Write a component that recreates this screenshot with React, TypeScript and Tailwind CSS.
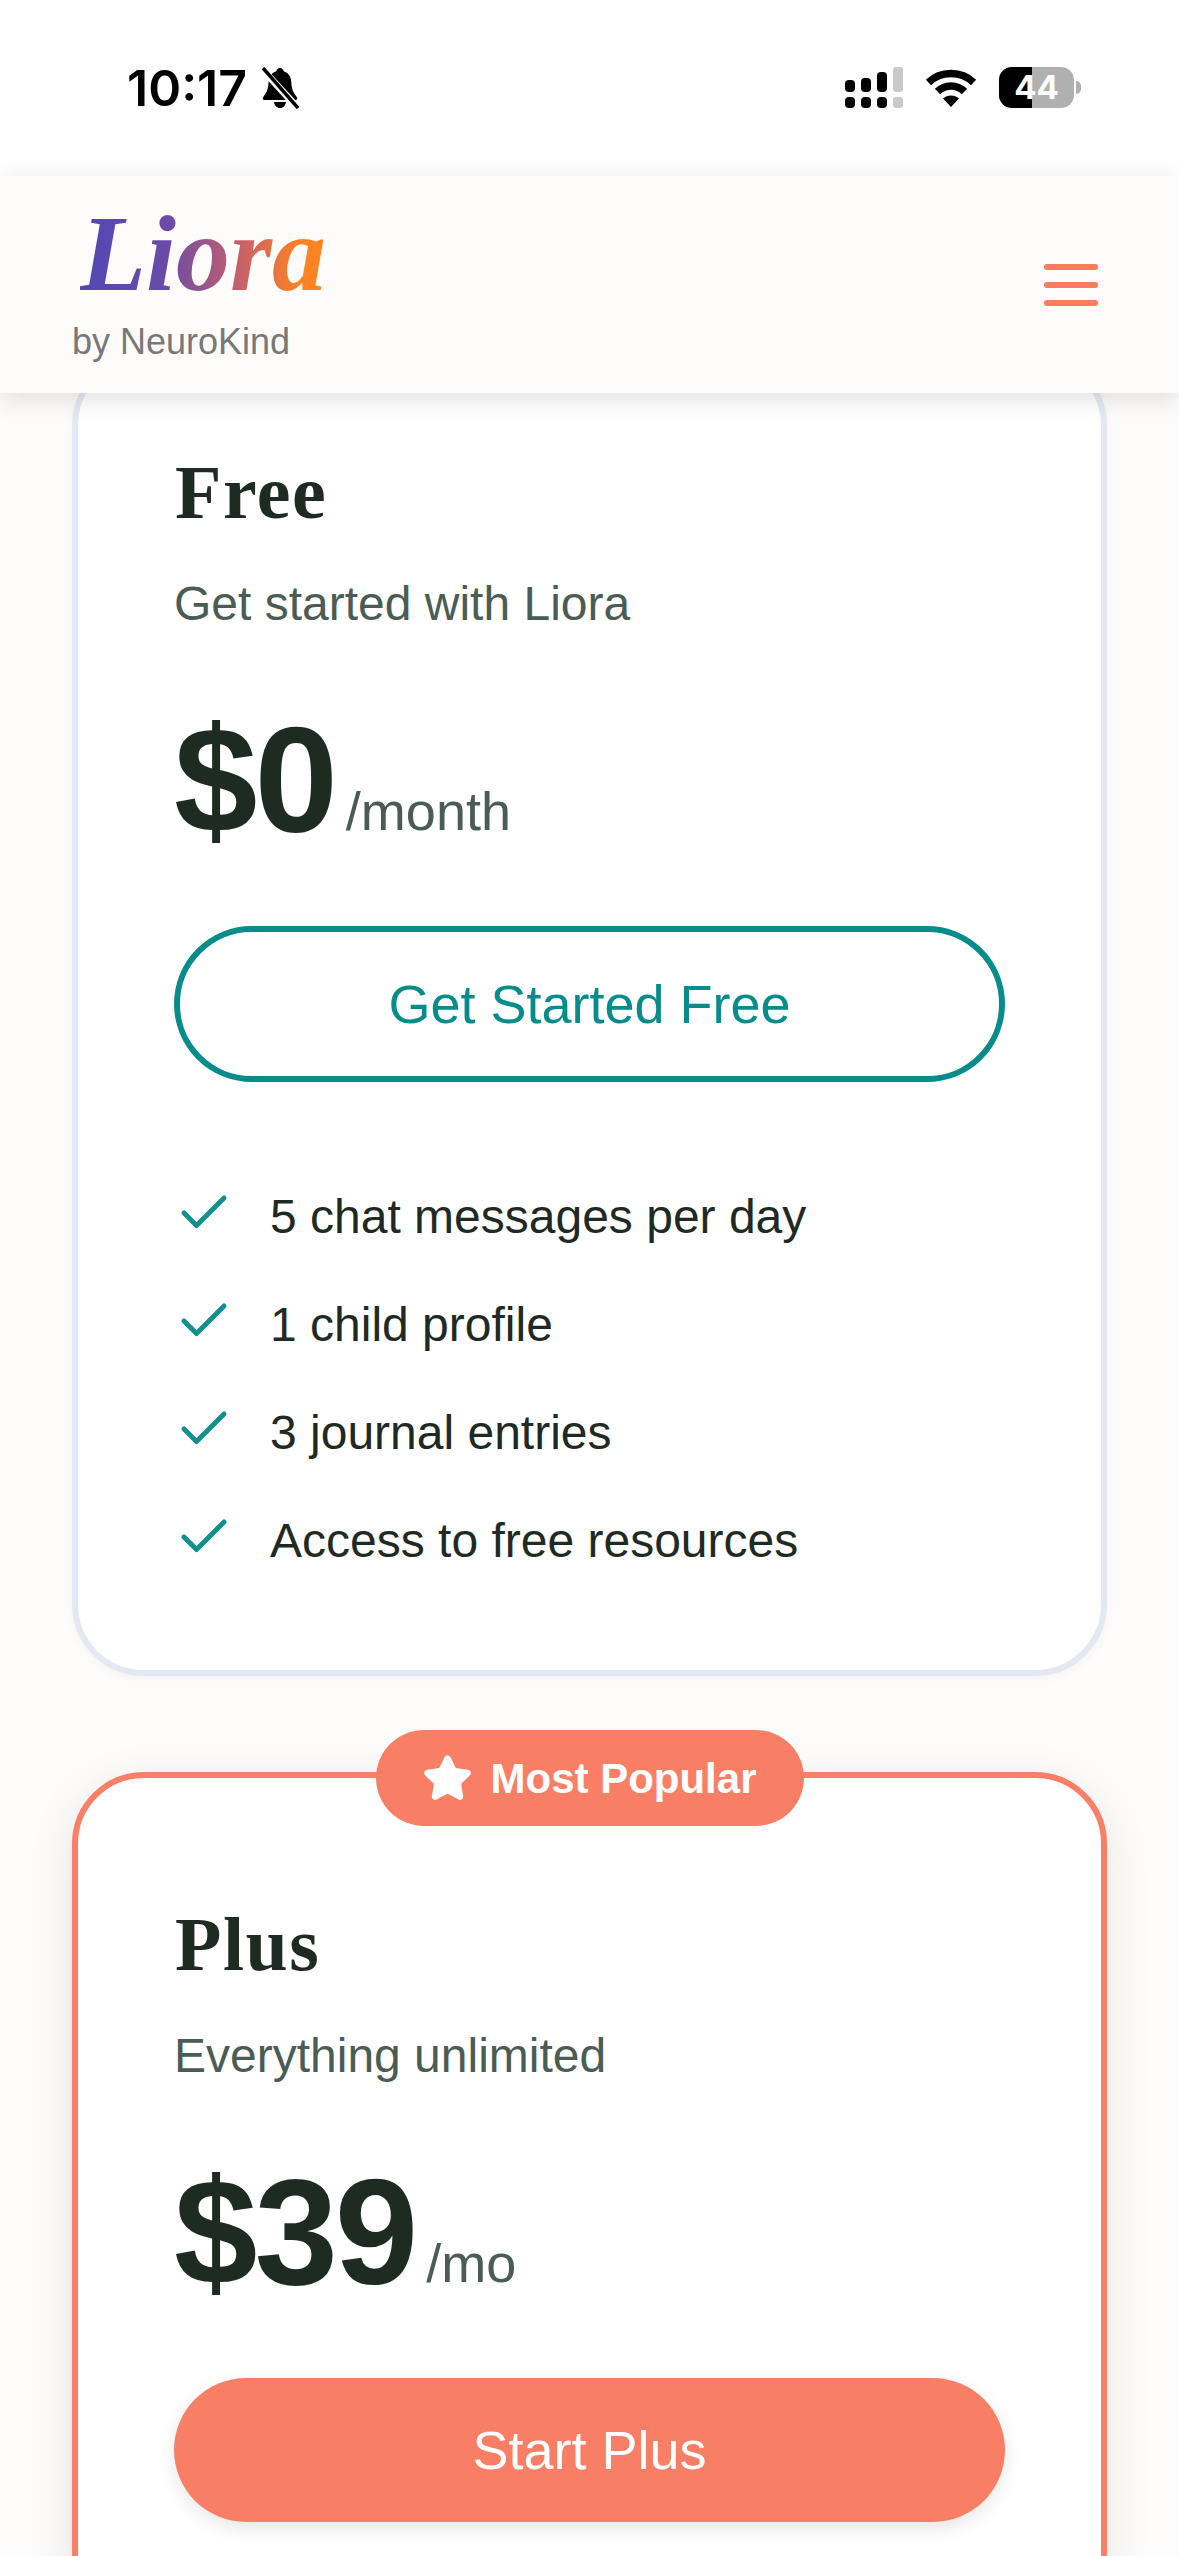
import { Check, Star } from "lucide-react";

const sans = "font-['Liberation_Sans',Arial,sans-serif]";
const serif = "font-['Liberation_Serif','Times_New_Roman',serif]";

function BellOff() {
  return (
    <svg viewBox="0 0 38 42" className="w-[38px] h-[42px]" aria-hidden="true">
      <path
        d="M19 1c-2 0-3.400 1.300-3.700 3.200C10.500 5.600 8 9.600 7.600 15c-.3 5-1 8.500-3 11.500L2 30.500c-.8 1.300 0 2.500 1.500 2.500h31c1.500 0 2.300-1.200 1.500-2.500l-3-4.500c-1.800-3-2.400-6-2.700-11-.4-5.500-3-9.400-7.600-10.800C22.400 2.300 21 1 19 1z"
        fill="#000"
      />
      <path d="M13 35h12c-.4 3.400-2.800 6-6 6s-5.600-2.600-6-6z" fill="#000" />
      <path d="M2 3l34 37" stroke="#fff" strokeWidth="7" />
      <path d="M2 1l35 40" stroke="#000" strokeWidth="3.500" />
    </svg>
  );
}

function Signal() {
  return (
    <svg viewBox="0 0 58 41" className="w-[58px] h-[41px]" aria-hidden="true">
      <rect x="0" y="13" width="10" height="12" rx="4" fill="#000" />
      <rect x="16" y="11" width="10" height="14" rx="4" fill="#000" />
      <rect x="32" y="5" width="10" height="20" rx="4" fill="#000" />
      <rect x="48" y="0" width="10" height="25" rx="3" fill="#c9c9c9" />
      <rect x="0" y="30" width="10" height="11" rx="4" fill="#000" />
      <rect x="16" y="30" width="10" height="11" rx="4" fill="#000" />
      <rect x="32" y="30" width="10" height="11" rx="4" fill="#000" />
      <rect x="48" y="30" width="10" height="11" rx="3" fill="#c9c9c9" />
    </svg>
  );
}

function Wifi() {
  return (
    <svg viewBox="0 0 52 38" className="w-[52px] h-[38px]" aria-hidden="true">
      <path d="M3.500 13.500C15.500 1.500 36.500 1.500 48.500 13.500" fill="none" stroke="#000" strokeWidth="7.500" />
      <path d="M12.500 22.500C20 15 32 15 39.500 22.500" fill="none" stroke="#000" strokeWidth="7.500" />
      <path d="M18 29.500c4.500-4 11.500-4 16 0L26 38z" fill="#000" />
    </svg>
  );
}

function Battery() {
  return (
    <div className="flex items-center gap-[2px]">
      <div className="relative w-[75px] h-[41px] rounded-[13px] overflow-hidden bg-[#b0b0b0]">
        <div className="h-full w-[33px] bg-black" />
        <span className="absolute inset-0 flex items-center justify-center font-['Inter',sans-serif] font-bold text-[33px] leading-none text-white">
          44
        </span>
      </div>
      <div className="w-[5px] h-[13px] rounded-r-full bg-[#b0b0b0]" />
    </div>
  );
}

function StatusBar() {
  return (
    <div className="h-[176px] bg-white flex items-start justify-between pl-[127px] pr-[98px] pt-[67px]">
      <div className="flex items-center gap-[14px] h-[41px]">
        <span className="font-['Inter',sans-serif] font-semibold text-[50px] leading-none text-black">10:17</span>
        <BellOff />
      </div>
      <div className="flex items-center gap-[22px] h-[41px]">
        <Signal />
        <Wifi />
        <Battery />
      </div>
    </div>
  );
}

function Header() {
  return (
    <header className="relative z-10 h-[217px] bg-[#fdfcfa] shadow-[0_6px_24px_rgba(0,0,0,0.12)] flex items-center justify-between pl-[72px] pr-[81px]">
      <div className="flex flex-col gap-[21px]">
        <span className="ml-[8px] h-[94px] font-['Liberation_Serif',serif] italic font-bold text-[108px] leading-[94px] w-fit bg-[linear-gradient(90deg,#5148b5_0%,#6a4aa8_35%,#c7606a_65%,#ff8322_90%)] bg-clip-text text-transparent">
          Liora
        </span>
        <span className={`${sans} text-[36px] leading-[40px] text-[#78787a]`}>by NeuroKind</span>
      </div>
      <div className="flex flex-col gap-[12px] w-[54px]">
        <span className="h-[6px] rounded-full bg-[#fb7c5f]" />
        <span className="h-[6px] rounded-full bg-[#fb7c5f]" />
        <span className="h-[6px] rounded-full bg-[#fb7c5f]" />
      </div>
    </header>
  );
}

function Feature({ text }: { text: string }) {
  return (
    <li className="flex items-center gap-[36px] h-[72px]">
      <Check className="w-[60px] h-[60px] text-[#11908f] shrink-0 -translate-y-[4px]" strokeWidth={2} />
      <span className={`${sans} text-[48px] leading-[72px] text-[#1f2a24]`}>{text}</span>
    </li>
  );
}

function PlanHead({ name, note, price, unit }: { name: string; note: string; price: string; unit: string }) {
  return (
    <>
      <h2 className={`${serif} font-bold text-[76px] leading-[72px] tracking-[1.500px] pl-[1px] text-[#1e2b22]`}>{name}</h2>
      <p className={`${sans} mt-[40px] text-[48px] leading-[72px] text-[#4a5c54]`}>{note}</p>
      <div className={`${sans} mt-[68px] flex items-baseline gap-[11px]`}>
        <span className="font-bold text-[150px] leading-[144px] tracking-[-3px] text-[#1e2b22]">{price}</span>
        <span className="text-[54px] leading-[72px] -translate-y-[2px] text-[#4a5c54]">{unit}</span>
      </div>
    </>
  );
}

export default function App() {
  return (
    <div className="h-[2556px] w-[1179px] overflow-hidden bg-[#fdfcfa]">
      <StatusBar />
      <Header />
      <main className="px-[72px] -mt-[39px] flex flex-col gap-[96px]">
        <section className="rounded-[72px] border-[6px] border-[#e3e8f3] bg-white px-[96px] pt-[96px] pb-[93px] shadow-[0_3px_9px_rgba(0,0,0,0.04)]">
          <PlanHead name="Free" note="Get started with Liora" price="$0" unit="/month" />
          <button className={`${sans} mt-[74px] w-full h-[156px] rounded-full border-[6px] border-[#078c8c] text-[54px] text-[#078c8c]`}>
            Get Started Free
          </button>
          <ul className="mt-[99px] flex flex-col gap-[36px]">
            <Feature text="5 chat messages per day" />
            <Feature text="1 child profile" />
            <Feature text="3 journal entries" />
            <Feature text="Access to free resources" />
          </ul>
        </section>

        <section className="relative rounded-[72px] border-[6px] border-[#fb7f66] bg-white px-[96px] pt-[130px] pb-[96px] shadow-[0_12px_45px_rgba(0,0,0,0.1)]">
          <div className={`${sans} absolute left-1/2 -translate-x-1/2 -top-[48px] h-[96px] w-[428px] rounded-full bg-[#f87f65] flex items-center justify-center gap-[17px] text-white font-bold text-[42px]`}>
            <Star className="w-[51px] h-[51px] fill-white text-white" />
            <span>Most Popular</span>
          </div>
          <PlanHead name="Plus" note="Everything unlimited" price="$39" unit="/mo" />
          <button className={`${sans} mt-[74px] w-full h-[144px] rounded-full bg-[#f87f65] text-[54px] text-white shadow-[0_6px_18px_rgba(0,0,0,0.1)]`}>
            Start Plus
          </button>
        </section>
      </main>
    </div>
  );
}
